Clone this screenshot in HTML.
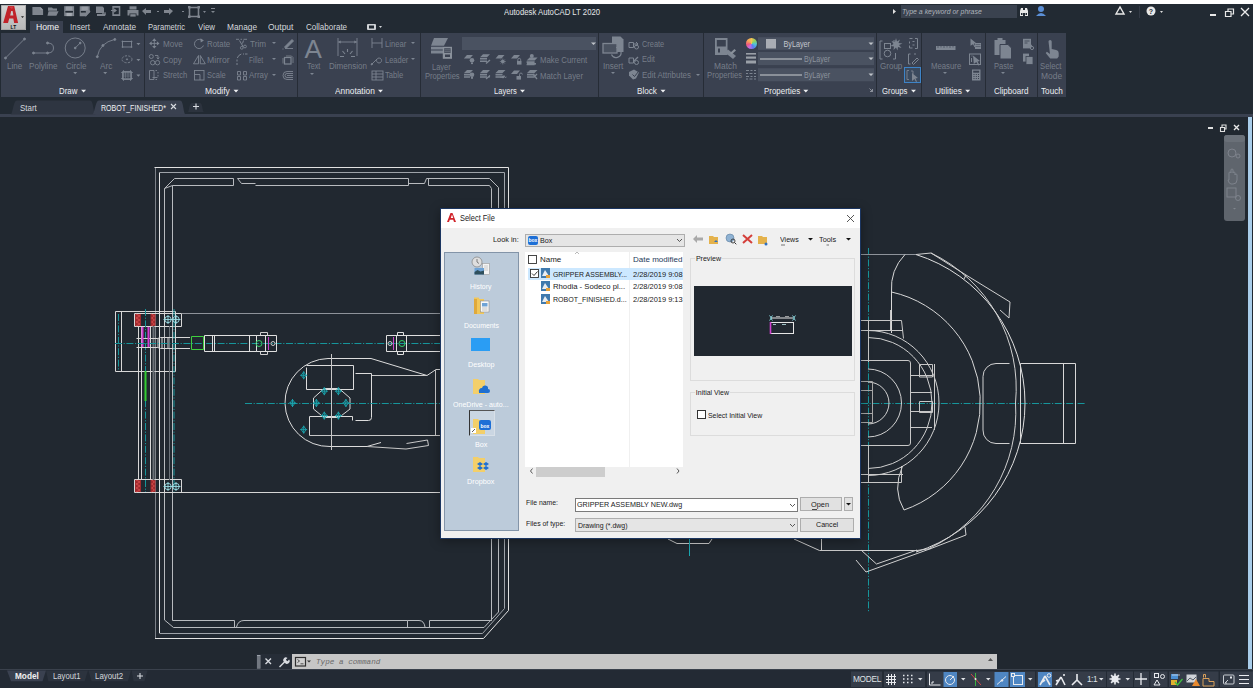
<!DOCTYPE html>
<html><head><meta charset="utf-8">
<style>
*{margin:0;padding:0;box-sizing:border-box}
html,body{width:1257px;height:694px;overflow:hidden;background:#fff;font-family:"Liberation Sans",sans-serif}
.a{position:absolute}
.t{position:absolute;white-space:nowrap;font-size:8.5px;line-height:10px;color:#767d88}
.w{color:#e8e8e8}
.tab{position:absolute;top:21px;font-size:8.5px;line-height:12px;color:#d4d7dc;white-space:nowrap}
.pl{position:absolute;top:85px;font-size:8.5px;line-height:10px;color:#eceef0;white-space:nowrap}
.sep{position:absolute;top:33px;width:1px;height:64px;background:#262c36}
.dl{position:absolute;white-space:nowrap;font-size:8px;line-height:10px;color:#1a1a1a}
svg{position:absolute;overflow:visible}
</style></head><body>
<!-- app frame -->
<div class="a" style="left:0;top:4px;width:1253px;height:684px;background:#222a33"></div>
<!-- title -->
<div class="t w" style="left:504.1px;top:6.7px;font-size:8.5px;color:#e4e6e9;transform:scaleX(0.910);transform-origin:0 0">Autodesk AutoCAD LT 2020</div>
<!-- ribbon panel bg -->
<div class="a" style="left:1px;top:33px;width:1065px;height:64px;background:#3a4150"></div>
<div class="a" style="left:30px;top:21px;width:33px;height:12px;background:#3a4150"></div>
<div class="sep" style="left:144px"></div>
<div class="sep" style="left:297px"></div>
<div class="sep" style="left:420px"></div>
<div class="sep" style="left:598px"></div>
<div class="sep" style="left:703px"></div>
<div class="sep" style="left:876px"></div>
<div class="sep" style="left:921px"></div>
<div class="sep" style="left:985px"></div>
<div class="sep" style="left:1037px"></div>

<!-- QAT -->
<svg style="left:0;top:0" width="1257" height="40">
 <g fill="#7f858e">
  <path d="M32.4 7h8l2.7 2.7V15h-10.7z"/><path d="M40.4 7v2.7h2.7" fill="#a0a5ad"/>
  <path d="M48 7.4h4l1 1.2h4v2.2h-9z M48.5 11.2h10.1l-2.2 4.5h-8.9z"/>
  <rect x="64.2" y="6.2" width="9.9" height="9.9"/><rect x="66" y="6.6" width="6.3" height="3.6" fill="#979ca4"/><rect x="65.3" y="11" width="7.7" height="1.6" fill="#222a33"/><rect x="66.5" y="13" width="5.3" height="3.1" fill="#a6abb2"/>
  <path d="M79.7 6.2h10v6l-3.5 4h-6.5z"/><rect x="81.5" y="6.6" width="6.3" height="3.6" fill="#979ca4"/><rect x="80.8" y="11" width="5" height="1.6" fill="#222a33"/>
  <path d="M83.5 13l2.2 2.4 4.3-4.6" stroke="#7f858e" stroke-width="1.5" fill="none"/>
  <path d="M96 6.5h6.5l1.5 1.5v5h-8z"/><path d="M97 14h9l-1 2h-8z"/><rect x="102" y="12.5" width="4" height="1.2"/>
  <path d="M112.3 6h8v10h-8z"/><rect x="113.8" y="7.8" width="5" height="6.4" fill="#222a33"/><path d="M111 10.5h5M114 9l2 1.5-2 1.5" stroke="#7f858e" stroke-width="1.2" fill="none"/>
  <path d="M127.5 10h11v5.5h-11z"/><rect x="129.5" y="6.3" width="7" height="3.2"/><rect x="129.5" y="13.5" width="7" height="3.2" fill="#222a33"/><rect x="130.3" y="14.2" width="5.4" height="2.4"/>
  <path d="M142 11l4-3v2h5v3h-5v2z"/>
  <path d="M173 11l-4-3v2h-5v3h5v2z"/>
  <rect x="157" y="11" width="2" height="1"/><rect x="182" y="11" width="2" height="1"/>
  <path d="M189.5 7.5h9v9h-9z" fill="none" stroke="#7f858e" stroke-width="1.6"/>
  <rect x="188" y="6" width="2.5" height="2.5"/><rect x="197.5" y="6" width="2.5" height="2.5"/><rect x="188" y="15.5" width="2.5" height="2.5"/><rect x="197.5" y="15.5" width="2.5" height="2.5"/>
  <path d="M203 11h3l-1.5 2z"/><rect x="211" y="8" width="4" height="1"/><path d="M211 11h4l-2 2z"/>
 </g>
 <!-- search -->
 <path d="M893 9v5l3-2.5z" fill="#e0e0e0"/>
 <rect x="901" y="5" width="116" height="13" fill="#3a424f"/>
 <g fill="#e8e8e8"><path d="M1020 16v-5l1-3h2v8z M1025 16v-8h2l1 3v5z"/><rect x="1023" y="10" width="2" height="3"/></g><g fill="#222a33"><rect x="1021" y="13" width="1.5" height="2"/><rect x="1025.5" y="13" width="1.5" height="2"/></g>
 <g fill="#5b8fd6"><circle cx="1041" cy="9" r="3"/><path d="M1036 16q5-6 10 0z"/></g>
 <path d="M1120 7l-4 7h8z" fill="none" stroke="#e8e8e8" stroke-width="1.4"/><path d="M1129 11h3l-1.5 2z" fill="#ddd"/>
 <rect x="1139" y="6" width="1" height="12" fill="#333a45"/>
 <circle cx="1151" cy="11" r="4.5" fill="#e8e8e8"/><text x="1151" y="14" font-size="7" font-weight="bold" text-anchor="middle" fill="#222a33" font-family="Liberation Sans">?</text>
 <path d="M1160 11h3l-1.5 2z" fill="#ddd"/>
 <rect x="1210" y="14" width="6" height="2" fill="#e8e8e8"/>
 <path d="M1225.5 11.5h5.5v5h-5.5z M1228 11.5v-2.5h5.5v5h-2.5" fill="none" stroke="#e8e8e8" stroke-width="1.2"/>
 <path d="M1241 8l8 8M1249 8l-8 8" stroke="#ececec" stroke-width="1.3"/>
 <!-- logo -->
 <defs><linearGradient id="lg" x1="0" y1="0" x2="0" y2="1"><stop offset="0" stop-color="#d6d6d6"/><stop offset="0.5" stop-color="#c4c4c4"/><stop offset="1" stop-color="#b8b8b8"/></linearGradient></defs>
 <rect x="1" y="5" width="25" height="25" fill="url(#lg)"/>
 <rect x="1.5" y="5.5" width="24" height="24" fill="none" stroke="#9a9a9a" stroke-width="0.6"/>
 <path d="M3.2 23L8 6h6.2l3.9 17h-3.9l-0.9-4.5h-4.1L8 23z M10.2 15.5h3.2l-0.8-4.5h-1.4z" fill="#c0232a" fill-rule="evenodd"/>
 <path d="M8.5 6.5h5L12 9z" fill="#e0555a" opacity="0.6"/>
 <text x="10.6" y="28.6" font-size="4.6" font-weight="bold" fill="#111" font-family="Liberation Sans" textLength="5.6" lengthAdjust="spacingAndGlyphs">LT</text>
 <path d="M21 16.2h3l-1.5 1.7z" fill="#222"/>
 <!-- video icon on tab row -->
 <rect x="367" y="24" width="9" height="6" fill="#cfd2d6" rx="1"/><rect x="369" y="25.5" width="5" height="3" fill="#222a33"/><path d="M379 26h3l-1.5 2z" fill="#cfd2d6"/>
</svg>

<!-- tabs -->
<div class="tab" style="left:35.5px;color:#f4f4f4;top:20.5px;transform:scaleX(1.014);transform-origin:0 0">Home</div>
<div class="tab" style="left:69.5px;top:20.5px;transform:scaleX(0.940);transform-origin:0 0">Insert</div>
<div class="tab" style="left:102.5px;top:20.5px;transform:scaleX(0.970);transform-origin:0 0">Annotate</div>
<div class="tab" style="left:147.5px;top:20.5px;transform:scaleX(0.900);transform-origin:0 0">Parametric</div>
<div class="tab" style="left:197.5px;top:20.5px;transform:scaleX(0.930);transform-origin:0 0">View</div>
<div class="tab" style="left:226.5px;top:20.5px;transform:scaleX(0.977);transform-origin:0 0">Manage</div>
<div class="tab" style="left:268.1px;top:20.5px;transform:scaleX(0.995);transform-origin:0 0">Output</div>
<div class="tab" style="left:306.2px;top:20.5px;transform:scaleX(0.945);transform-origin:0 0">Collaborate</div>

<!-- panel labels -->
<div class="pl" style="left:59.2px;top:85.8px;transform:scaleX(0.922);transform-origin:0 0">Draw</div>
<div class="pl" style="left:204.5px;top:85.8px;transform:scaleX(0.990);transform-origin:0 0">Modify</div>
<div class="pl" style="left:334.5px;top:85.8px;transform:scaleX(0.979);transform-origin:0 0">Annotation</div>
<div class="pl" style="left:494.1px;top:85.8px;transform:scaleX(0.890);transform-origin:0 0">Layers</div>
<div class="pl" style="left:637.0px;top:85.8px;transform:scaleX(0.957);transform-origin:0 0">Block</div>
<div class="pl" style="left:764.0px;top:85.8px;transform:scaleX(0.932);transform-origin:0 0">Properties</div>
<div class="pl" style="left:882.0px;top:85.8px;transform:scaleX(0.915);transform-origin:0 0">Groups</div>
<div class="pl" style="left:935.0px;top:85.8px;transform:scaleX(0.982);transform-origin:0 0">Utilities</div>
<div class="pl" style="left:994.0px;top:85.8px;transform:scaleX(0.945);transform-origin:0 0">Clipboard</div>
<div class="pl" style="left:1040.8px;top:85.8px;transform:scaleX(0.961);transform-origin:0 0">Touch</div>


<!-- ribbon items -->
<div class="t" style="left:7.3px;top:61.2px;transform:scaleX(0.945);transform-origin:0 0">Line</div>
<div class="t" style="left:29.1px;top:61.2px;transform:scaleX(0.954);transform-origin:0 0">Polyline</div>
<div class="t" style="left:65.7px;top:61.2px;transform:scaleX(0.943);transform-origin:0 0">Circle</div>
<div class="t" style="left:99.7px;top:61.2px;transform:scaleX(0.973);transform-origin:0 0">Arc</div>
<div class="t" style="left:163.2px;top:38.6px;transform:scaleX(0.957);transform-origin:0 0">Move</div>
<div class="t" style="left:163.2px;top:54.5px;transform:scaleX(0.942);transform-origin:0 0">Copy</div>
<div class="t" style="left:163.2px;top:70.3px;transform:scaleX(0.902);transform-origin:0 0">Stretch</div>
<div class="t" style="left:207.1px;top:38.6px;transform:scaleX(0.926);transform-origin:0 0">Rotate</div>
<div class="t" style="left:207.1px;top:54.5px;transform:scaleX(1.018);transform-origin:0 0">Mirror</div>
<div class="t" style="left:207.1px;top:70.3px;transform:scaleX(0.884);transform-origin:0 0">Scale</div>
<div class="t" style="left:249.5px;top:38.6px;transform:scaleX(0.959);transform-origin:0 0">Trim</div>
<div class="t" style="left:249.3px;top:54.5px;transform:scaleX(0.780);transform-origin:0 0">Fillet</div>
<div class="t" style="left:249.3px;top:70.3px;transform:scaleX(0.930);transform-origin:0 0">Array</div>
<div class="t" style="left:307.0px;top:61.0px;transform:scaleX(0.853);transform-origin:0 0">Text</div>
<div class="t" style="left:328.5px;top:61.0px;transform:scaleX(0.946);transform-origin:0 0">Dimension</div>
<div class="t" style="left:385.2px;top:38.6px;transform:scaleX(0.901);transform-origin:0 0">Linear</div>
<div class="t" style="left:385.2px;top:54.5px;transform:scaleX(0.880);transform-origin:0 0">Leader</div>
<div class="t" style="left:385.2px;top:70.3px;transform:scaleX(0.900);transform-origin:0 0">Table</div>
<div class="t" style="left:431.9px;top:61.5px;transform:scaleX(0.884);transform-origin:0 0">Layer</div>
<div class="t" style="left:424.5px;top:70.6px;transform:scaleX(0.895);transform-origin:0 0">Properties</div>
<div class="t" style="left:540.2px;top:54.6px;transform:scaleX(0.918);transform-origin:0 0">Make Current</div>
<div class="t" style="left:540.2px;top:70.6px;transform:scaleX(0.919);transform-origin:0 0">Match Layer</div>
<div class="t" style="left:602.9px;top:60.6px;transform:scaleX(0.955);transform-origin:0 0">Insert</div>
<div class="t" style="left:642.3px;top:38.9px;transform:scaleX(0.870);transform-origin:0 0">Create</div>
<div class="t" style="left:642.3px;top:54.1px;transform:scaleX(0.880);transform-origin:0 0">Edit</div>
<div class="t" style="left:642.3px;top:70.2px;transform:scaleX(0.934);transform-origin:0 0">Edit Attributes</div>
<div class="t" style="left:713.5px;top:61.2px;transform:scaleX(0.989);transform-origin:0 0">Match</div>
<div class="t" style="left:707.0px;top:70.2px;transform:scaleX(0.908);transform-origin:0 0">Properties</div>
<div class="t" style="left:880.2px;top:61.3px;transform:scaleX(0.944);transform-origin:0 0">Group</div>
<div class="t" style="left:930.5px;top:61.3px;transform:scaleX(0.913);transform-origin:0 0">Measure</div>
<div class="t" style="left:993.5px;top:61.3px;transform:scaleX(0.892);transform-origin:0 0">Paste</div>
<div class="t" style="left:1040.4px;top:61.3px;transform:scaleX(0.910);transform-origin:0 0">Select</div>
<div class="t" style="left:1040.8px;top:70.9px;transform:scaleX(0.992);transform-origin:0 0">Mode</div>
<svg style="left:0;top:0" width="1257" height="100">
 <g fill="#7d8591" stroke="none">
  <!-- dropdown arrows -->
  <path d="M73.2 72h4l-2 2.2z M103.2 72h4l-2 2.2z M136.4 43h4l-2 2.2z M136.4 59h4l-2 2.2z M136.4 74.5h4l-2 2.2z"/>
  <path d="M272 42h4l-2 2z M272 58h4l-2 2z M272 74h4l-2 2z M411 42h4l-2 2z M411 58h4l-2 2z M310 73h4l-2 2z"/>
  <path d="M611 72h4l-2 2z M696 74h4l-2 2z M943 72h4l-2 2z M1001 72h4l-2 2z"/>
 </g>
 <g fill="#eceef0">
  <path d="M81.1 89.8h5l-2.5 2.6z M233.5 89.8h5l-2.5 2.6z M378.0 89.8h5l-2.5 2.6z M520.0 89.8h5l-2.5 2.6z M660.5 89.8h5l-2.5 2.6z M803.3 89.8h5l-2.5 2.6z M911.0 89.8h5l-2.5 2.6z M965.2 89.8h5l-2.5 2.6z"/>
 </g>
 <g fill="none" stroke="#7d8591" stroke-width="0.9">
  <!-- Draw -->
  <path d="M5.5 58L24.5 39"/><circle cx="5.5" cy="58" r="1" fill="#7d8591"/><circle cx="24.5" cy="39" r="1" fill="#7d8591"/>
  <path d="M33.5 53h14q6 0 6-5t-6-5"/><circle cx="33.5" cy="53" r="1" fill="#7d8591"/><circle cx="47.5" cy="53" r="1" fill="#7d8591"/><circle cx="47.5" cy="43" r="1" fill="#7d8591"/>
  <circle cx="75.2" cy="48" r="10"/><path d="M75.2 48l5-5"/><circle cx="75.2" cy="48" r="0.9" fill="#7d8591"/><circle cx="80.2" cy="43" r="0.9" fill="#7d8591"/>
  <path d="M97.3 56.7q2.5-14 17.5-17.3"/><circle cx="97.3" cy="56.7" r="1" fill="#7d8591"/><circle cx="102.9" cy="45.5" r="1" fill="#7d8591"/><circle cx="114.8" cy="39.4" r="1" fill="#7d8591"/>
  <path d="M122.5 41.5h9v5.5h-9z"/><path d="M121.5 41.5h2M130.5 41.5h2M121.5 47h2M130.5 47h2M122.5 40.5v2M131.5 40.5v2M122.5 46v2M131.5 46v2" stroke-width="0.7"/>
  <ellipse cx="127" cy="59.3" rx="5" ry="3.5" stroke-dasharray="2.2 1.3"/><circle cx="127" cy="59.3" r="0.6" fill="#7d8591"/>
  <path d="M122.5 71.5h9v8h-9z"/><path d="M121 72.5h12M121 78.5h12M123.5 70v11M130.5 70v11" stroke-width="0.7"/><path d="M123 74h8M123 76h8M125.5 72v6M128 72v6" stroke-width="0.5"/>
  <!-- Modify -->
  <path d="M154.3 40v7M150.8 43.4h7"/>
  <path d="M154.3 38.3l-2.2 2.6h4.4zM154.3 48.5l-2.2-2.6h4.4zM149.1 43.4l2.6-2.2v4.4zM159.5 43.4l-2.6-2.2v4.4z" fill="#7d8591" stroke="none"/>
  <circle cx="151.3" cy="56.5" r="2"/><path d="M155 55.5h3v3.5M156.8 57.5l1.2 1.6 1.2-1.6"/><circle cx="152.7" cy="62.7" r="2.2"/><circle cx="157.5" cy="62.7" r="2.2"/>
  <path d="M154 70.5h-4.5v9h4.5M154 70.5v9" /><path d="M155.5 70.5h1.5M158 72v1.5M158 75v1.5M155.5 79.5h1.5M152.5 77.5h5" stroke-width="0.9"/>
  <path d="M203.4 45.5a4.6 4.6 0 1 1-2-5.5"/><path d="M200.5 38.2l3.4 2.2-3.2 2.2z" fill="#7d8591" stroke="none"/>
  <path d="M198.5 55.5v8.3h-5zM200.3 55.5v8.3h5z"/>
  <rect x="194.5" y="70.5" width="9.5" height="9.5"/><path d="M194.5 74.5h5.5v5.5"/>
  <path d="M236 39.3h3M240.5 39.3h1.5M243.5 39.3h3.5" stroke-width="0.9"/>
  <path d="M239.5 40.5l3.5 6M243.5 40.5l-1 3" stroke-width="1"/><circle cx="241.8" cy="47.8" r="1.4"/><circle cx="245" cy="46.5" r="1.4"/>
  <path d="M237 65v-2M237 61.5v-2M237.3 58q1-3 4-4M243 54h1M245 54h2.5" stroke-width="1"/>
  <path d="M237.5 71.5h3v3.5h-3zM243.5 71.5h3v3.5h-3zM237.5 76.5h3v3.5h-3zM243.5 76.5h3v3.5h-3z" stroke-width="0.9"/>
  <path d="M284.5 47l7.5-7.5 1.5 1.5-7.5 7.5z" fill="#7d8591"/><path d="M282.5 49h1M285 48.5h8" stroke-width="0.9"/>
  <rect x="284.5" y="57.5" width="6.5" height="6.5" stroke-width="1.2"/><path d="M286 56h5.5l1.5 1.5v5.5M283 58v5.5" stroke-width="0.8"/>
  <path d="M293 71.5h-6a4 4 0 0 0 0 8h6M293 73.5h-6a2 2 0 0 0 0 4h6M287 75.5h6" stroke-width="0.9"/>
    <!-- Annotation -->
  <path d="M338 38v18M357 38v18M338 42h19M339 42l2-1M339 42l2 1M356 42l-2-1M356 42l-2 1"/>
  <path d="M342.5 51l2.5 3M347.5 49v3M352.5 51l-2.5 3M340 56.5h4M351 56.5h4" stroke-width="1.1"/>
  <path d="M372 38v10M382 38v10M372 43h10"/>
  <path d="M372 64l5-5M379 58a2.5 2.5 0 1 0 0.1 0"/><path d="M371 65l2-1-1-1z" fill="#7d8591"/>
  <rect x="372" y="71" width="11" height="9"/><path d="M372 74h11M372 77h11M376 71v9"/>
 </g>
 <text x="304.5" y="57.6" font-size="26" fill="#7d8591" font-family="Liberation Sans">A</text>
 <!-- Layers -->
 <g fill="#7d8591">
  <path d="M434 38h14l-4 7.8h-13z"/><path d="M431 46.8h12v2.8h-12z M431 50.6h12v3h-12z"/>
  <path d="M444 40l3-1.5-3 7z" opacity="0"/>
  <rect x="442.8" y="46.8" width="9.2" height="12" fill="#8a919b"/><rect x="444.2" y="48.3" width="6.4" height="4.5" fill="#3a4150"/><path d="M444.5 49.8h6M444.5 51.3h6" stroke="#8a919b" stroke-width="0.6"/><rect x="445" y="54.5" width="5" height="2.5" fill="#3a4150"/>
 </g>
 <rect x="462" y="37" width="134" height="13" fill="#4a5261"/>
 <path d="M591 42.5h5l-2.5 2.5z" fill="#c0c4ca"/>
 <g fill="#7d8591">
  <path d="M466.9 55.0h6.0l-3.0 3.6h-6.0z"/><circle cx="472" cy="60.3" r="2.3"/><rect x="471" y="62.5" width="2" height="1.6"/>
  <path d="M483.0 54.2h7.0l-3.0 3.0h-7.0z M480.0 58.0h7.0v1.6h-7.0z M480.0 60.4h7.0v1.6h-7.0z"/><path d="M486 63.5l4-3.5" stroke="#7d8591" stroke-width="1.4"/>
  <path d="M498.5 55.0h6.0l-3.0 3.6h-6.0z"/><circle cx="502.8" cy="61.5" r="1.8"/><path d="M502.8 58.5v6M499.8 61.5h6M500.8 59.5l4 4M504.8 59.5l-4 4" stroke="#7d8591" stroke-width="0.7"/>
  <path d="M514.0 55.0h6.0l-3.0 3.6h-6.0z"/><rect x="517" y="61" width="4.5" height="3.6"/><path d="M517.8 61v-1.2a1.45 1.45 0 0 1 2.9 0v1.2" fill="none" stroke="#7d8591" stroke-width="0.9"/>
  <circle cx="531.8" cy="56" r="2"/><path d="M529.6 57.5h8.0l-3.0 3.0h-8.0z M526.6 61.3h8.0v1.6h-8.0z M526.6 63.7h8.0v1.6h-8.0z"/><path d="M527 63h9v1.6h-9z"/>
  <path d="M467.0 70.0h6.0l-3.0 3.0h-6.0z M464.0 73.8h6.0v1.6h-6.0z M464.0 76.2h6.0v1.6h-6.0z"/><circle cx="472" cy="74.8" r="2.3"/><rect x="471" y="77" width="2" height="1.8"/>
  <path d="M483.0 70.0h7.0l-3.0 3.0h-7.0z M480.0 73.8h7.0v1.6h-7.0z M480.0 76.2h7.0v1.6h-7.0z"/><path d="M486 79l4-3.5" stroke="#7d8591" stroke-width="1.2"/><path d="M490 75v2.5h-2.5z"/>
  <path d="M498.5 70.0h7.0l-3.0 3.0h-7.0z M495.5 73.8h7.0v1.6h-7.0z M495.5 76.2h7.0v1.6h-7.0z"/><path d="M500 77l3 .5 1-2 1 2 1.5-.5" stroke="#7d8591" stroke-width="0.9" fill="none"/><circle cx="503" cy="77" r="1.3"/>
  <path d="M514.0 70.5h6.0l-3.0 3.6h-6.0z"/><rect x="516.5" y="76" width="4.5" height="3.6"/><path d="M519.5 76v-1.5a1.45 1.45 0 0 1 2.9 0" fill="none" stroke="#7d8591" stroke-width="0.9"/>
  <path d="M530.0 70.0h7.5l-3.0 3.0h-7.5z M527.0 73.8h7.5v1.6h-7.5z M527.0 76.2h7.5v1.6h-7.5z"/><path d="M533 74l4 5M537 74l-3 3" stroke="#7d8591" stroke-width="1.3"/>
 </g>
 <!-- Block -->
 <g fill="none" stroke="#7d8591" stroke-width="1">
  <path d="M612 36.6h8.5l3 3V52h-11.5z" fill="#7d8591" stroke="none"/>
  <rect x="603" y="43.5" width="14" height="9.5" fill="#4a5260" stroke="#7d8591" stroke-width="1.3"/>
  <path d="M616 47.5a5 5 0 1 1 -4.5 7" stroke-width="1.2"/>
  <path d="M629 42.5h4.5v5h-4.5z M634 44h3.5" /><path d="M636 42l2 2-2 2" /><circle cx="636.5" cy="47" r="2"/>
  <path d="M629 58h4.5v5h-4.5z"/><path d="M634 61l4-4" stroke-width="1.3"/><circle cx="636.5" cy="62.5" r="2"/>
 </g>
 <path d="M629 72l5-2.5 5 3-3 6-3 1-4-4z" fill="#7d8591"/><path d="M632.5 74.5l2 2 4-5" stroke="#3a4150" stroke-width="1" fill="none"/>
 <!-- Properties -->
 <g fill="#7d8591">
  <rect x="715" y="38" width="12.5" height="17"/><rect x="716.8" y="40" width="9" height="6.5" fill="#3a4150"/><rect x="718" y="48.5" width="2" height="4" fill="#3a4150"/>
  <path d="M725 52.5l3-3 8 6.5-3 3z"/><path d="M730 53l4.5-4 1.5 1.5-4.5 4z" fill="#8a919b"/>
 </g>
 <g fill="#9aa0a8"><rect x="746" y="53" width="10" height="1.6"/><rect x="746" y="56.5" width="10" height="2.2"/><rect x="746" y="60.5" width="10" height="3"/></g>
 <g fill="#7d8591"><path d="M746 70.5h3M750.5 70.5h2M754 70.5h2M746 73.5h2M749.5 73.5h3M754 73.5h2M746 76.5h3M750.5 76.5h2M754 76.5h2M746 79h2M749.5 79h3M754 79h2" stroke="#7d8591" stroke-width="1.2"/></g>
 <rect x="758" y="37.2" width="116" height="12.7" fill="#4a5261"/>
 <rect x="758" y="52" width="116" height="13.1" fill="#4a5261"/>
 <rect x="758" y="68.2" width="116" height="13.1" fill="#4a5261"/>
 <rect x="766" y="39" width="10" height="9.5" fill="#a9adb4"/>
 <text x="783.5" y="46.8" font-size="8.5" fill="#c3c7cd" font-family="Liberation Sans" textLength="26.5" lengthAdjust="spacingAndGlyphs">ByLayer</text>
 <rect x="760" y="58.5" width="42" height="1" fill="#c9cdd2"/><text x="804" y="62.2" font-size="8.5" fill="#8d949e" font-family="Liberation Sans" textLength="26" lengthAdjust="spacingAndGlyphs">ByLayer</text>
 <rect x="760" y="74.5" width="42" height="1" fill="#c9cdd2"/><text x="804" y="78.2" font-size="8.5" fill="#8d949e" font-family="Liberation Sans" textLength="26" lengthAdjust="spacingAndGlyphs">ByLayer</text>
 <path d="M868.5 42.5h5l-2.5 2.5z M868.5 57.5h5l-2.5 2.5z M868.5 73.5h5l-2.5 2.5z" fill="#c0c4ca"/>
 <path d="M869.5 88.5l3 3M872.5 89v2.5h-2.5" fill="none" stroke="#a0a5ad" stroke-width="0.8"/>
 <!-- Groups -->
 <g fill="none" stroke="#7d8591" stroke-width="1">
  <path d="M882.5 41h-2.5v18h2.5M893 41h2.5M893 59h2.5v-6"/><rect x="884.5" y="43.5" width="6" height="5"/><circle cx="887.5" cy="53.5" r="3.3"/>
  <path d="M909.5 38.5h3M909.5 41.5v2M909.5 45.5v2.5h3M915 38.5h2.5v10h-2.5M912.5 41.5h2M912.5 45h2"/>
  <path d="M910.5 54h-2v10h2M914 54h2"/><path d="M912 63l5-5 1.5 1.5-5 5z"/>
 </g>
 <path d="M896 38l1 3.5 3-2-1.5 3.5 4 .5-3.5 1.5 2.5 3-3.5-1-.5 3.5-1.5-3-2.5 2.5.5-3.5-3.5-.5 3-2-2-3 3.5 1z" fill="#7d8591"/>
 <rect x="904.5" y="67.5" width="16" height="15" fill="#3b4a5e" stroke="#3e84c8" stroke-width="1"/>
 <path d="M909 70.5h-2v9h2M911 71h2v3" fill="none" stroke="#7d8591" stroke-width="0.9"/><path d="M912 73l6 5-2.5.5 1.5 3-1 .5-1.5-3-2.5 2z" fill="#7d8591"/>
 <!-- Utilities -->
 <rect x="936" y="46" width="19.5" height="4" fill="#7d8591"/>
 <path d="M938 46v2M941 46v1.5M944 46v2M947 46v1.5M950 46v2M953 46v1.5" stroke="#3a4150" stroke-width="0.6"/>
 <g fill="#7d8591">
  <path d="M970.5 38.5l5.5 4.5-2 .8 1.5 3-1 .5-1.5-3-2.5 1.5z"/><rect x="975" y="43" width="6" height="6"/>
  <path d="M975.5 44.5h5M975.5 46.5h5" stroke="#3a4150" stroke-width="0.5"/>
  <rect x="969.5" y="54" width="11" height="10.5" fill="none" stroke="#7d8591"/><path d="M973 55.5l7 5.5-2.5.5 2 3.5-1.2.6-2-3.5-2.5 2z"/>
  <path d="M971.5 58v4M971.5 56h1" stroke="#7d8591"/>
  <rect x="972" y="69.5" width="8.5" height="11"/><rect x="973.2" y="70.7" width="6" height="2" fill="#3a4150"/>
  <path d="M973.5 74.5h1M975.8 74.5h1M978 74.5h1M973.5 76.5h1M975.8 76.5h1M978 76.5h1M973.5 78.5h1M975.8 78.5h1M978 78.5h1" stroke="#3a4150" stroke-width="1"/>
 </g>
 <!-- Clipboard -->
 <g fill="#7d8591">
  <rect x="994.5" y="40" width="11" height="15"/><rect x="997.5" y="38" width="5" height="3"/>
  <path d="M1000 44.5h8l3.5 3.5v11h-11.5z" stroke="#3a4150" stroke-width="1"/>
  <rect x="1023" y="38.8" width="8" height="9.6"/><path d="M1024.5 41h5M1024.5 43h3" stroke="#3a4150" stroke-width="0.8"/>
  <circle cx="1030" cy="46" r="1.6" fill="none" stroke="#7d8591"/><circle cx="1032" cy="48" r="1.6" fill="none" stroke="#7d8591"/>
  <rect x="1023" y="53.6" width="6" height="8"/><rect x="1026" y="56.5" width="7" height="8" stroke="#3a4150" stroke-width="0.8"/>
 </g>
 <!-- Touch -->
 <path d="M1048.5 41.5a1.6 1.6 0 0 1 3.2 0v7.5l4.5 1q2.5.6 2.5 3v3.5l-1.5 2h-7l-4.5-5.5 1.2-1.2 3.1 2.2z" fill="#7d8591"/>
</svg>

<div class="a" style="left:745.5px;top:38px;width:11px;height:11px;border-radius:50%;background:conic-gradient(#f6c453,#8fd35f,#4fc3d9,#5a7df0,#c36be6,#f05a7a,#f6a35a,#f6c453)"></div>
<!-- file tabs -->
<div class="a" style="left:0;top:114px;width:1253px;height:3px;background:#3a4150"></div>
<svg style="left:0;top:0" width="220" height="120">
 <path d="M10.5 114.5C13 114.5 13 100.5 17 100.5H90C94 100.5 93 114.5 96 114.5Z" fill="#2e3541"/>
 <path d="M92 114.5C95 114.5 95 100.5 99 100.5H180C184 100.5 183 114.5 186 114.5Z" fill="#3a4150"/>
 <path d="M188 112C189 112 189 103 192 103H200C203 103 202 112 204 112Z" fill="#2c333e"/>
</svg>


<div class="t" style="left:20.1px;top:102.5px;color:#d6d9de;transform:scaleX(0.936);transform-origin:0 0">Start</div>
<div class="t" style="left:101.0px;top:102.5px;color:#eef0f2;transform:scaleX(0.833);transform-origin:0 0">ROBOT_FINISHED*</div>

<!-- drawing area -->
<div class="a" style="left:0;top:117px;width:1253px;height:553px;background:#212830"></div>
<div class="a" style="left:1248px;top:117px;width:4px;height:553px;background:#a9cdea"></div>


<svg style="left:0;top:0" width="1257" height="694">
 <g fill="none" stroke-width="1">
  <!-- left frame -->
  <path d="M155.5 638V167.5" stroke="#7c8188"/>
  <path d="M154.5 167.5H508.5V610.5L483.5 638.5H155" stroke="#e2e2e2"/>
  <path d="M159.5 633V172.5" stroke="#e6e6e6"/>
  <path d="M159.5 172.5H504.5V608.5L482.5 633.5H159.5" stroke="#9ea3a9"/>
  <path d="M164.5 620V188.5L174.5 178.5H233.5V185.5H172.5V620.5" stroke="#b8bbbf"/>
  <path d="M164.5 188.5L172.5 185.5" stroke="#b8bbbf"/>
  <path d="M237.5 178.5H408.5V185.5H255.5M237.5 178.5L241.5 183.5H255.5" stroke="#b8bbbf"/>
  <path d="M408.5 183.5H424.5L426.5 178.5H489.5L498.5 187.5V612L484 627.5H173.5L164.5 620" stroke="#b8bbbf"/>
  <path d="M428.5 178.5V185.5H489.5L491.5 188.5V620.5L484.5 620.5" stroke="#b8bbbf"/>
  <path d="M172.5 620.5H234.5V627M236.5 627Q238 620.5 244 620.5H407.5V627M407.5 620.5H419Q424 620.5 425 627M429.5 627V620.5H491.5" stroke="#b8bbbf"/>
  <path d="M182 313.5H441" stroke="#8e939a"/>
  <path d="M181 492.5H441" stroke="#d6d6d6"/>
  <!-- left gripper block -->
  <path d="M115.5 311.5H175.5V371.5H115.5Z" stroke="#d8d8d8"/>
  <path d="M121.5 312V371" stroke="#d8d8d8"/>
  <path d="M118.5 314V370" stroke="#16959b" stroke-dasharray="7 1.6 1.2 1.6"/>
  <path d="M134.5 313.5H181.5V326.5H134.5Z M164.5 313.5V326.5" stroke="#d8d8d8"/>
  <path d="M134.5 479.5H181.5V492.5H134.5Z M164.5 479.5V492.5" stroke="#d8d8d8"/>
  <path d="M138.5 326V480M141.5 326V480M150.5 326V480" stroke="#d8d8d8"/>
  <path d="M153.5 326V480" stroke="#6a7077" stroke-width="2"/>
  <path d="M169.5 326V480" stroke="#6a7077"/>
  <path d="M145.5 309V492" stroke="#16959b" stroke-dasharray="7 1.6 1.2 1.6"/>
  <path d="M145.5 371V401" stroke="#33cc33" stroke-width="2"/>
  <path d="M136.5 338.5H157.5L160.5 337.5H190M136.5 347.5H157.5L160.5 348.5H190M158 338V348M162 338V348M168 338V348" stroke="#d8d8d8"/>
  <path d="M174 309V492" stroke="#16959b" stroke-dasharray="7 1.6 1.2 1.6"/>
  <rect x="135" y="314" width="6" height="12" fill="#9e2a2e"/><rect x="135" y="480" width="6" height="12" fill="#9e2a2e"/><rect x="150.5" y="314" width="5" height="12" fill="#9e2a2e"/><rect x="150.5" y="480" width="5" height="12" fill="#9e2a2e"/><path d="M136 314l4 2l-4 2l4 2l-4 2l4 2l-4 2" stroke="#e05050" stroke-width="0.8" fill="none"/><path d="M136 480l4 2l-4 2l4 2l-4 2l4 2l-4 2" stroke="#e05050" stroke-width="0.8" fill="none"/><path d="M151.5 314l3 2l-3 2l3 2l-3 2l3 2l-3 2" stroke="#e05050" stroke-width="0.8" fill="none"/><path d="M151.5 480l3 2l-3 2l3 2l-3 2l3 2l-3 2" stroke="#e05050" stroke-width="0.8" fill="none"/>
  <path d="M142.5 327V347M148.5 327V347" stroke="#d23bd2" stroke-width="2"/>
  <path d="M115 343.5H440" stroke="#16959b" stroke-dasharray="7 1.6 1.2 1.6"/>
  <path d="M191.5 336.5H203.5V349.5H191.5Z" stroke="#3fcf3f"/>
  <path d="M204.5 335.5H256.5V351.5H204.5Z M212.5 336V351M214.5 336V351M249.5 336V351" stroke="#e0e0e0"/>
  <path d="M256.5 335.5H276.5V351.5H256.5Z M265.5 335.5V351.5" stroke="#e0e0e0"/>
  <path d="M260.5 335.5V332.5H267.5V335.5M260.5 351.5V354.5H267.5V351.5" stroke="#d0d0d0"/>
  <path d="M386.5 335.5H441M386.5 351.5H441M386.5 335.5V351.5M406.5 335.5V351.5M396.5 335.5V351.5M397.5 335.5V332.5H403.5V335.5M397.5 351.5V354.5H403.5V351.5" stroke="#e0e0e0"/>
  <circle cx="259" cy="343.5" r="3" stroke="#33cc66"/><circle cx="402" cy="343.5" r="3" stroke="#33cc66"/>
  <circle cx="273" cy="343.5" r="2" stroke="#c8c8c8"/><circle cx="390" cy="343.5" r="2" stroke="#c8c8c8"/>
  <path d="M268.5 337V350M393.5 337V350" stroke="#cc44cc"/>
  <g stroke="#9adfe6" stroke-width="0.9"><circle cx="168" cy="319.5" r="3.2"/><path d="M163.5 319.5h9M168 315.0v9"/><circle cx="176" cy="319.5" r="3.2"/><path d="M171.5 319.5h9M176 315.0v9"/><circle cx="168" cy="486.5" r="3.2"/><path d="M163.5 486.5h9M168 482.0v9"/><circle cx="176" cy="486.5" r="3.2"/><path d="M171.5 486.5h9M176 482.0v9"/></g>
  <!-- wrist -->
  <path d="M328 358.5A44 44 0 0 0 330 446.5H367L381 442.5" stroke="#dcdcdc"/>
  <path d="M328 358.5H371L427 375.5L436 369.5H441" stroke="#dcdcdc"/>
  <path d="M372 375.5H427M435.5 370V435" stroke="#c8c8c8"/>
  <path d="M306.5 367.5V389.5H353.5V365.5H306.5" stroke="#dcdcdc"/>
  <path d="M355.5 373.5H371.5V417.5Q371.5 420.5 368.5 420.5H355.5" stroke="#dcdcdc"/>
  <path d="M309.5 435.5V416.5H352.5V420.5" stroke="#dcdcdc"/>
  <path d="M309.5 435.5H441" stroke="#c8c8c8"/>
  <path d="M367 446.5L406 449M406.5 443.5L427.5 440L428.5 445.5L406 449" stroke="#c8c8c8"/>
  <polygon points="324,388.5 339,388.5 350,398 350,409 339,417.5 324,417.5 313.5,409 313.5,398" stroke="#d8d8d8"/>
  <path d="M245 403.5H441" stroke="#16959b" stroke-dasharray="7 1.6 1.2 1.6"/>
  <path d="M331.5 354V450" stroke="#c8c8c8"/>
  <g stroke="#1aa6b0" stroke-width="0.9"><path d="M301.2 375.3l2.5-3.5 2.5 3.5-2.5 3.5z M300.2 375.3h7M303.7 371.3v8 M290.0 403.0l2.5-3.5 2.5 3.5-2.5 3.5z M289.0 403.0h7M292.5 399.0v8 M301.2 429.6l2.5-3.5 2.5 3.5-2.5 3.5z M300.2 429.6h7M303.7 425.6v8 M321.8 391.2l2.5-3.5 2.5 3.5-2.5 3.5z M320.8 391.2h7M324.3 387.2v8 M335.9 391.2l2.5-3.5 2.5 3.5-2.5 3.5z M334.9 391.2h7M338.4 387.2v8 M313.9 403.0l2.5-3.5 2.5 3.5-2.5 3.5z M312.9 403.0h7M316.4 399.0v8 M343.4 403.0l2.5-3.5 2.5 3.5-2.5 3.5z M342.4 403.0h7M345.9 399.0v8 M321.8 415.6l2.5-3.5 2.5 3.5-2.5 3.5z M320.8 415.6h7M324.3 411.6v8 M335.9 415.6l2.5-3.5 2.5 3.5-2.5 3.5z M334.9 415.6h7M338.4 411.6v8"/></g>
  <!-- below dialog -->
  <path d="M668 539L677 543.5H709L712 539" stroke="#c8c8c8"/>
  <path d="M689.5 539V556" stroke="#1aa6b0"/>
  <path d="M794 539L819.5 550.5H866M821.5 539V550" stroke="#c8c8c8"/>
  <!-- right robot -->
  <path d="M868.5 248V612" stroke="#16959b" stroke-dasharray="7 1.6 1.2 1.6"/>
  <path d="M861 403.5H1085" stroke="#16959b" stroke-dasharray="7 1.6 1.2 1.6"/>
  <path d="M861 254.5H916" stroke="#8e939a"/>
  <path d="M916 254.5A156 156 0 0 1 916 552" stroke="#e0e0e0"/>
  <path d="M931 253A150 150 0 0 1 1015.5 403" stroke="#d0d0d0"/>
  <path d="M1015.5 403A150 150 0 0 1 930 548" stroke="#d0d0d0"/>
  <path d="M905 254.5Q890 270 891.5 292V333" stroke="#d8d8d8"/>
  <path d="M891.5 292A113.5 113.5 0 0 1 904 510" stroke="#d8d8d8"/>
  <path d="M904 510Q892 490 902.5 466" stroke="#d8d8d8"/>
  <path d="M916 254.5L931 253L966 275L964 279M966 275L1010 302L1009 318L1000 310" stroke="#d0d0d0"/>
  <path d="M861 550.5H917L931 548.5L966 535L965 527M917 550L876.5 564L861 550M931 548.5L866 572L856 560" stroke="#d0d0d0"/>
  <path d="M861 320.5H901.5L903.5 338.5M861 330.5H903M868.5 320.5V362M890.5 310V331" stroke="#c8c8c8"/>
  <path d="M861 482.5H901.5V466M861 474.5H903M868.5 445V482" stroke="#c8c8c8"/>
  <path d="M868 330.5A71 72.5 0 0 1 868 475.5M868 337.5A64 65.5 0 0 1 868 468.5" stroke="#d0d0d0"/>
  <path d="M861 360.5H908Q910.5 360.5 910.5 363V443Q910.5 445.5 908 445.5H861" stroke="#c8c8c8"/>
  <path d="M868 369A33.5 34 0 0 1 868 437M868 382A21 21 0 0 1 868 424" stroke="#d0d0d0"/>
  <path d="M861 381.5H872.5V422.5H861M861 390.5H872M861 413.5H872" stroke="#a8a8a8"/>
  <path d="M919.5 364.5H932.5V377H919.5ZM919.5 401.5H932.5V412.5H919.5ZM911 375.5H932M911 392.5H932M911 411.5H932M911 427.5H932M934.5 364V430" stroke="#c8c8c8"/>
  <path d="M1009.5 363.5H996A13 13 0 0 0 983 376.5V430A13 13 0 0 0 996 443.5H1009.5" stroke="#d0d0d0"/>
  <path d="M1020.5 363.5H1075.5V443.5H1020.5Z M1063.5 364V443" stroke="#d8d8d8"/>
 </g>
</svg>

<!-- command line -->
<div class="a" style="left:256px;top:654px;width:36px;height:16px;background:#262d37"></div>
<div class="a" style="left:292px;top:654px;width:705px;height:16px;background:#c6c6c6"></div>


<!-- viewport controls & navbar -->
<svg style="left:0;top:0" width="1257" height="694">
 <rect x="1208" y="127" width="5" height="2" fill="#e0e0e0"/>
 <path d="M1220.5 127.5h4v4h-4z M1222 127v-2h4v4h-1.5" fill="none" stroke="#e0e0e0" stroke-width="1.1"/>
 <path d="M1234 125l5 5M1239 125l-5 5" stroke="#e8e8e8" stroke-width="1.4"/>
 <rect x="1224" y="135" width="21" height="86" rx="3" fill="#5f656d"/>
 <rect x="1224" y="135" width="21" height="7" rx="3" fill="#6a7078"/>
 <g fill="none" stroke="#80868e" stroke-width="0.9">
  <circle cx="1232" cy="153" r="4"/><circle cx="1238" cy="156" r="2"/>
  <path d="M1229 180v-7a1 1 0 0 1 2 0v-3a1 1 0 0 1 2 0v3a1 1 0 0 1 2 0v2a1 1 0 0 1 2 0v5q0 4-4 4h-2q-2 0-3-4z"/>
  <rect x="1227" y="188" width="9" height="9"/><circle cx="1238" cy="198" r="2.5"/>
 </g>
 <path d="M1233 208h3l-1.5 1.5z" fill="#80868e"/>
 <!-- file tab x and + -->
 <path d="M171 104l5 5M176 104l-5 5" stroke="#d8dbe0" stroke-width="1.1"/>
 <path d="M196 103.5v6M193 106.5h6" stroke="#d8dbe0" stroke-width="1.1"/>
 <!-- command line -->
 <g fill="#9aa0a8"><rect x="257" y="655" width="3.5" height="13.5"/></g>
 <g stroke="#262d37" stroke-width="0.7"><path d="M257 657h3.5M257 659h3.5M257 661h3.5M257 663h3.5M257 665h3.5M257 667h3.5"/></g>
 <path d="M265.5 658.5l5.5 5.5M271 658.5l-5.5 5.5" stroke="#d8dbe0" stroke-width="1.4"/>
 <path d="M279.5 667l5.5-5.5" stroke="#d8dbe0" stroke-width="1.5"/><path d="M284.3 662.2a2.6 2.6 0 0 1 3.2-4.2l-1.6 1.6.6 1 1 .6 1.6-1.6a2.6 2.6 0 0 1-4.2 3.2z" fill="#d8dbe0"/>
 <rect x="295.5" y="657.5" width="10" height="8.5" fill="#cfcfcf" stroke="#2e2e2e" stroke-width="1.2"/>
 <path d="M297.5 659.5l2 1.5-2 1.5M300.5 663.8h3" stroke="#2e2e2e" stroke-width="0.8" fill="none"/>
 <path d="M307 660.5h4l-2 2z" fill="#333"/>
 <path d="M988 661h5l-2.5-3z" fill="#555"/>
</svg>
<div class="t" style="left:315.9px;top:656.9px;font-family:'Liberation Mono',monospace;font-style:italic;color:#6a6a6a;font-size:8px;transform:scaleX(0.957);transform-origin:0 0">Type a command</div>
<div class="t" style="left:901.7px;top:7.0px;font-style:italic;color:#aeb3ba;font-size:8px;transform:scaleX(0.868);transform-origin:0 0">Type a keyword or phrase</div>

<!-- status bar -->
<div class="a" style="left:0;top:670px;width:1253px;height:18px;background:#232a34"></div>
<div class="a" style="left:0;top:669px;width:1253px;height:1px;background:#3a414c"></div>
<svg style="left:0;top:0" width="200" height="694"><path d="M7 670.5h39l-3.5 10.8h-31.5z" fill="#3a4150"/><path d="M46 670.5h42l-3.4 10.8h-36.3z" fill="#2c333e"/><path d="M88.4 670.5h42.6l-3.1 10.8h-36.3z" fill="#2c333e"/><path d="M131.7 670.5h15.9l-3.2 10.8h-10.8z" fill="#2c333e"/></svg>



<div class="t" style="left:14.9px;top:671.3px;color:#f0f0f0;font-weight:bold;font-size:8.5px;transform:scaleX(0.969);transform-origin:0 0">Model</div>
<div class="t" style="left:52.5px;top:671.3px;color:#d4d7dc;transform:scaleX(0.912);transform-origin:0 0">Layout1</div>
<div class="t" style="left:95.0px;top:671.3px;color:#d4d7dc;transform:scaleX(0.926);transform-origin:0 0">Layout2</div>
<svg style="left:0;top:0" width="1257" height="694">
 <path d="M140 673v6M137 676h6" stroke="#d8dbe0" stroke-width="1.1"/>
 <g fill="#353c48">
  <rect x="851" y="671.5" width="31" height="15.5"/>
  <rect x="884" y="671.5" width="41" height="15.5"/>
  <rect x="927" y="671.5" width="108" height="15.5"/>
  <rect x="1036.5" y="671.5" width="69.5" height="15.5"/>
  <rect x="1107" y="671.5" width="26" height="15.5"/>
  <rect x="1134" y="671.5" width="15" height="15.5"/>
  <rect x="1150.5" y="671.5" width="17" height="15.5"/>
  <rect x="1169" y="671.5" width="49.5" height="15.5"/>
  <rect x="1220" y="671.5" width="33" height="15.5"/>
 </g>
 <g fill="#4f86c2">
  <rect x="943.5" y="672" width="13.5" height="15"/>
  <rect x="994.5" y="672" width="14" height="15"/>
  <rect x="1010" y="672" width="15" height="15"/>
  <rect x="1038" y="672" width="14" height="15"/>
 </g>
 <g fill="none" stroke="#e8eaee" stroke-width="1">
  <path d="M888.5 674v11M891.5 674v11M894.5 674v11M886 676.5h10M886 679.5h10M886 682.5h10"/>
  <path d="M903 675.5h1.5M907 675.5h1.5M911 675.5h1.5M903 679h1.5M907 679h1.5M911 679h1.5M903 682.5h1.5M907 682.5h1.5M911 682.5h1.5" stroke-width="1.6"/>
  <path d="M929.5 673.5v11.5h11"/><path d="M931 683h2v-2"/>
  <circle cx="950" cy="680" r="4.5"/><path d="M950 680l4-4"/>
  <path d="M997 684.5l9-8"/><circle cx="1002" cy="680.5" r="0.8" fill="#e8eaee"/>
  <rect x="1013.5" y="675.5" width="9" height="9"/><rect x="1011.5" y="673.5" width="3" height="3" fill="#4f86c2"/>
  <path d="M1045 676l-5 9M1045 676l5 9M1045 680l-3 2" stroke-width="1.6"/><circle cx="1049" cy="675.5" r="1.8"/>
  <path d="M1061 677l-5 8M1061 677l4 8M1059 680l-3 1" stroke-width="1.6"/><path d="M1063 674l2 2M1065 674l-2 2" stroke-width="0.8"/>
  <path d="M1077 674v6M1077 680l-5 5M1077 680l5 5" stroke-width="1.6"/>
  <path d="M1141 673v12M1135 679h12" stroke-width="1.3"/>
  <rect x="1154.5" y="673.5" width="4" height="4"/><path d="M1157 680l-3 5h6z"/><circle cx="1162.5" cy="676.5" r="2"/>
  <rect x="1223.5" y="675" width="10.5" height="9" rx="1" stroke="#c8ccd2"/><path d="M1225 683l3-3M1225 683h2" stroke="#c8ccd2"/><rect x="1230" y="676.5" width="2" height="2" fill="#e8eaee" stroke="none"/>
  <path d="M1239 675.5h10M1239 679.5h10M1239 683.5h10" stroke-width="1.2"/>
 </g>
 <path d="M918 678h4.5l-2.25 2.5z M961 678h4.5l-2.25 2.5z M986 678h4.5l-2.25 2.5z M1028 678h4.5l-2.25 2.5z M1099 678h4.5l-2.25 2.5z M1125.5 678h4.5l-2.25 2.5z" fill="#dfe2e6"/>
 <path d="M971 674l10 11" stroke="#d04848" stroke-width="1"/><path d="M975.5 673v13" stroke="#3cb043" stroke-width="1"/><circle cx="975.5" cy="679" r="1" fill="#eee"/>
 <g transform="translate(1115 679)"><circle r="3.6" fill="#e8eaee"/><circle r="1.5" fill="#353c48"/>
 <path d="M0 -5.5v11M-5.5 0h11M-3.9 -3.9l7.8 7.8M3.9 -3.9l-7.8 7.8" stroke="#e8eaee" stroke-width="1.6"/></g>
 <rect x="1171" y="674" width="7" height="5" fill="#4a8fd4"/><rect x="1171" y="680" width="6" height="5" fill="#e0b030"/><path d="M1175 682l2.5 3 5-6" stroke="#40c040" fill="none" stroke-width="1.3"/><path d="M1172 675h8" stroke="#e8eaee" stroke-width="0.7"/>
 <rect x="1186.5" y="674.5" width="10" height="8" fill="#cfd3d8"/><path d="M1187 681l3-3 3 2 3-3" stroke="#353c48" fill="none" stroke-width="0.8"/><path d="M1192 686l4-7 4 7z" fill="#e88a30"/>
 <path d="M1203.5 677.5v-3h2v3M1203 678.5h6v3h5v4.5h-11z" fill="none" stroke="#d9a05a" stroke-width="1"/>
</svg>
<div class="t" style="left:852.5px;top:674.3px;color:#dfe2e6;font-size:8.5px;letter-spacing:-0.3px;transform:scaleX(0.974);transform-origin:0 0">MODEL</div>
<div class="t" style="left:1086.5px;top:674.3px;color:#dfe2e6;font-size:8.5px;letter-spacing:-0.5px;transform:scaleX(0.968);transform-origin:0 0">1:1</div>

<!-- dialog -->
<div class="a" style="left:440px;top:208px;width:421px;height:331px;background:#1b3560;box-shadow:0 2px 10px rgba(0,0,0,0.35)"></div>
<div class="a" style="left:441px;top:209px;width:419px;height:329px;background:#f0f0f0"></div>
<div class="a" style="left:441px;top:209px;width:419px;height:19px;background:#fff"></div>
<svg style="left:0;top:0" width="1257" height="694">
 <path d="M447 222l3.5-9h2l3.5 9h-2l-.8-2.3h-3.4l-.8 2.3z M450.8 218h2.4l-1.2-3.4z" fill="#d0232a" fill-rule="evenodd"/>
 <path d="M847 215l7 7M854 215l-7 7" stroke="#444" stroke-width="0.9"/>
</svg>
<div class="dl" style="left:459.7px;top:213.4px;font-size:8.5px;color:#222;transform:scaleX(0.877);transform-origin:0 0">Select File</div>
<div class="dl" style="left:493.2px;top:235.2px;transform:scaleX(0.917);transform-origin:0 0">Look in:</div>
<!-- look in combo -->
<div class="a" style="left:525px;top:234px;width:160px;height:13px;background:#e5e5e5;border:1px solid #adadad"></div>
<div class="a" style="left:528px;top:236px;width:10px;height:9px;background:#1d6fd6;border-radius:2px"></div>
<div class="a" style="left:528.5px;top:237px;font-size:5px;line-height:7px;color:#fff;font-weight:bold">box</div>
<div class="dl" style="left:540.0px;top:236.0px;transform:scaleX(0.892);transform-origin:0 0">Box</div>
<svg style="left:0;top:0" width="1257" height="694">
 <path d="M677 239l2.5 2.5 2.5-2.5" fill="none" stroke="#444" stroke-width="0.9"/>
 <!-- toolbar -->
 <path d="M693 239l4-4v2.5h6v3h-6v2.5z" fill="#a9a9a9"/>
 <path d="M709 236h4l1 1h4v7h-9z" fill="#e4b24c"/><path d="M714 242l2-2 2 2z" fill="#2f6fbf"/>
 <circle cx="730" cy="238" r="4" fill="#8fb2d3" stroke="#5e7f9f" stroke-width="0.6"/><circle cx="733" cy="241" r="2" fill="none" stroke="#333" stroke-width="0.9"/><path d="M734.5 242.5l1.8 1.8" stroke="#333"/>
 <path d="M743 235l9 8M752 235l-9 8" stroke="#d43f3a" stroke-width="2"/>
 <path d="M758 236h4l1 1h4v7h-9z" fill="#e4b24c"/><circle cx="766" cy="244" r="1.5" fill="#2f6fbf"/>
 <path d="M808 238h5l-2.5 2.5z M846 238h5l-2.5 2.5z" fill="#111"/>
</svg>
<div class="dl" style="left:780.0px;top:235.1px;transform:scaleX(0.882);transform-origin:0 0">Views</div>
<div class="dl" style="left:819.3px;top:235.1px;transform:scaleX(0.920);transform-origin:0 0">Tools</div>
<!-- places bar -->
<div class="a" style="left:444px;top:252px;width:75px;height:279px;background:#bccbda;border:1px solid #8394a8"></div>
<div class="a" style="left:469px;top:410px;width:26px;height:26px;background:#cad6e2;border-left:1px solid #333;border-top:1px solid #555;border-right:1px solid #d8e0e8;border-bottom:1px solid #d8e0e8"></div>
<div class="dl" style="left:470.0px;top:281.8px;color:#fff;transform:scaleX(0.860);transform-origin:0 0">History</div>
<div class="dl" style="left:463.5px;top:320.8px;color:#fff;transform:scaleX(0.865);transform-origin:0 0">Documents</div>
<div class="dl" style="left:467.5px;top:360.4px;color:#fff;transform:scaleX(0.899);transform-origin:0 0">Desktop</div>
<div class="dl" style="left:452.9px;top:400.0px;color:#fff;transform:scaleX(0.881);transform-origin:0 0">OneDrive - auto...</div>
<div class="dl" style="left:475.2px;top:439.6px;color:#fff;transform:scaleX(0.906);transform-origin:0 0">Box</div>
<div class="dl" style="left:467.1px;top:477.2px;color:#fff;transform:scaleX(0.906);transform-origin:0 0">Dropbox</div>
<svg style="left:0;top:0" width="1257" height="694">
 <rect x="482.5" y="263.5" width="7" height="11" fill="#f4f4f4" stroke="#9a9a9a" stroke-width="0.6"/>
 <path d="M484 266h4M484 268h4M484 270h4" stroke="#b0b0b0" stroke-width="0.6"/>
 <rect x="474.5" y="268" width="9.5" height="6.5" fill="#6fa3d6"/><path d="M474.5 274.5v-2.5l3-2 3 1.5 3.5-1v4z" fill="#2f4f5c"/>
 <circle cx="477" cy="262" r="5" fill="#dedede" stroke="#808080" stroke-width="0.7"/><path d="M477 259v3l2 1.5" stroke="#555" stroke-width="0.7" fill="none"/>
 <path d="M474 297.5h4.5l1 1.5h4.5v15h-10z" fill="#f1c75a"/><path d="M474 299h3v15h-3z" fill="#e0a93a"/>
 <rect x="480.5" y="301" width="8.5" height="11" fill="#fafafa" stroke="#8c8c8c" stroke-width="0.6"/>
 <rect x="482" y="303" width="5.5" height="3.5" fill="#6fa3d6"/><path d="M482 308h5.5M482 310h5.5" stroke="#9a9a9a" stroke-width="0.6"/>
 <rect x="471" y="338" width="19" height="13" fill="#2a9df4"/>
 <path d="M473 379h5l1 1h6v14h-12z" fill="#f3cf6a"/><path d="M479 392a3 3 0 0 1 3-4a3 3 0 0 1 6 1a2 2 0 0 1 0 4h-9z" fill="#1f6fd0"/>
 <path d="M473 419h5l1 1h6v14h-12z" fill="#f3cf6a"/><rect x="479" y="420" width="12" height="10" fill="#1d6fd6" rx="2"/>
 <text x="480.5" y="427.5" font-size="5" fill="#fff" font-family="Liberation Sans" font-weight="bold">box</text>
 <rect x="471" y="428" width="5" height="5" fill="#fff"/><path d="M472 432l3-3" stroke="#333" stroke-width="0.8"/>
 <path d="M473 457h5l1 1h6v14h-12z" fill="#f3cf6a"/><path d="M480 462l3 2-3 2-3-2zM486 462l3 2-3 2-3-2zM480 466l3 2-3 2-3-2zM486 466l3 2-3 2-3-2z" fill="#1f6fd0"/>
</svg>
<!-- file list -->
<div class="a" style="left:525px;top:252px;width:158px;height:215px;background:#fff"></div>
<div class="a" style="left:629px;top:252px;width:1px;height:215px;background:#f0f0f0"></div>
<div class="a" style="left:528px;top:268px;width:155px;height:12px;background:#cce8ff"></div>
<svg style="left:0;top:0" width="1257" height="694">
 <rect x="528.5" y="255.5" width="8" height="8" fill="#fff" stroke="#333" stroke-width="0.9"/>
 <path d="M575 254l2-2 2 2" fill="none" stroke="#999" stroke-width="0.7"/>
 <rect x="530.5" y="269.5" width="8" height="8" fill="#fff" stroke="#333" stroke-width="0.9"/>
 <path d="M532 273.5l2 2 3.5-4" fill="none" stroke="#222" stroke-width="0.9"/>
 <g>
  <rect x="541" y="268" width="9" height="10" fill="#3f79ad"/><path d="M542 276l3-6 4 6z" fill="#e9edf1"/><rect x="546" y="275" width="4" height="3" fill="#e8a23a"/>
  <rect x="541" y="281" width="9" height="10" fill="#3f79ad"/><path d="M542 289l3-6 4 6z" fill="#e9edf1"/><rect x="546" y="288" width="4" height="3" fill="#e8a23a"/>
  <rect x="541" y="294" width="9" height="10" fill="#3f79ad"/><path d="M542 302l3-6 4 6z" fill="#e9edf1"/><rect x="546" y="301" width="4" height="3" fill="#e8a23a"/>
 </g>
 <!-- scrollbar -->
 <path d="M532.5 468.5l-2 2.5 2 2.5M677 468.5l2 2.5-2 2.5" fill="none" stroke="#555" stroke-width="1"/>
</svg>
<div class="dl" style="left:540.3px;top:255.3px;transform:scaleX(0.998);transform-origin:0 0">Name</div>
<div class="dl" style="left:633.4px;top:255.3px;color:#1e395b;transform:scaleX(1.001);transform-origin:0 0">Date modified</div>
<div class="dl" style="left:552.5px;top:269.7px;transform:scaleX(0.861);transform-origin:0 0">GRIPPER ASSEMBLY...</div>
<div class="dl" style="left:552.5px;top:282.0px;transform:scaleX(0.965);transform-origin:0 0">Rhodia - Sodeco pl...</div>
<div class="dl" style="left:552.5px;top:294.5px;transform:scaleX(0.881);transform-origin:0 0">ROBOT_FINISHED.d...</div>
<div class="dl" style="left:633.4px;top:269.7px;transform:scaleX(0.929);transform-origin:0 0">2/28/2019 9:08</div>
<div class="dl" style="left:633.4px;top:282.0px;transform:scaleX(0.929);transform-origin:0 0">2/28/2019 9:08</div>
<div class="dl" style="left:633.4px;top:294.5px;transform:scaleX(0.929);transform-origin:0 0">2/28/2019 9:13</div>
<div class="a" style="left:536px;top:467px;width:69px;height:10px;background:#cdcdcd"></div>
<!-- preview -->
<div class="a" style="left:690px;top:258px;width:165px;height:123px;border:1px solid #dcdcdc"></div>
<div class="dl" style="left:695.4px;top:253.7px;background:#f0f0f0;padding:0 1px;transform:scaleX(0.882);transform-origin:0 0">Preview</div>
<div class="a" style="left:694px;top:286px;width:158px;height:70px;background:#212830"></div>
<svg style="left:0;top:0" width="1257" height="694">
 <path d="M771 318h22" stroke="#e6e6e6" stroke-width="1"/><path d="M776 316.5h4M785 316.5h4" stroke="#cfcfcf" stroke-width="0.7"/>
 <path d="M769.5 315.5l2 2.5-2 2.5M772.5 315.5l-2 2.5 2 2.5M792.5 315.5l2 2.5-2 2.5M795.5 315.5l-2 2.5 2 2.5" stroke="#8fe0e8" stroke-width="0.9" fill="none"/>
 <rect x="770.5" y="322.5" width="23" height="11" fill="none" stroke="#e6e6e6" stroke-width="1"/>
 <path d="M770.5 322v12" stroke="#d040d0" stroke-width="1.6"/>
 <path d="M773 324.5h3M782 324.5h4" stroke="#bfe8ec" stroke-width="0.8"/>
</svg>
<div class="a" style="left:690px;top:392px;width:165px;height:44px;border:1px solid #dcdcdc"></div>
<div class="dl" style="left:695.4px;top:387.6px;background:#f0f0f0;padding:0 1px;transform:scaleX(0.869);transform-origin:0 0">Initial View</div>
<div class="a" style="left:697px;top:410px;width:9px;height:9px;border:1px solid #333;background:#fff"></div>
<div class="dl" style="left:707.5px;top:410.6px;transform:scaleX(0.866);transform-origin:0 0">Select Initial View</div>
<!-- bottom -->
<div class="dl" style="left:526.3px;top:498.3px;transform:scaleX(0.854);transform-origin:0 0">File name:</div>
<div class="dl" style="left:526.3px;top:518.5px;transform:scaleX(0.864);transform-origin:0 0">Files of type:</div>
<div class="a" style="left:575px;top:498px;width:223px;height:14px;background:#fff;border:1px solid #7a7a7a"></div>
<div class="dl" style="left:576.6px;top:500.1px;transform:scaleX(0.895);transform-origin:0 0">GRIPPER ASSEMBLY NEW.dwg</div>
<div class="a" style="left:575px;top:518px;width:223px;height:14px;background:#e5e5e5;border:1px solid #adadad"></div>
<div class="dl" style="left:578.1px;top:521.1px;transform:scaleX(0.870);transform-origin:0 0">Drawing (*.dwg)</div>
<svg style="left:0;top:0" width="1257" height="694">
 <path d="M790 504l2.5 2.5 2.5-2.5M790 524l2.5 2.5 2.5-2.5" fill="none" stroke="#444" stroke-width="0.9"/>
 </svg>
<div class="a" style="left:800px;top:497px;width:42px;height:14px;background:#e1e1e1;border:1px solid #adadad"></div>
<div class="a" style="left:844px;top:497px;width:9px;height:14px;background:#e1e1e1;border:1px solid #adadad"></div>
<div class="a" style="left:800px;top:518px;width:54px;height:14px;background:#e1e1e1;border:1px solid #adadad"></div>
<div class="dl" style="left:811.4px;top:499.8px;transform:scaleX(0.919);transform-origin:0 0">Open</div>
<div class="dl" style="left:815.5px;top:520.2px;transform:scaleX(0.891);transform-origin:0 0">Cancel</div>
<svg style="left:0;top:0" width="1257" height="694"><path d="M846 503h5l-2.5 2.5z" fill="#111"/><path d="M812 509.5h5" stroke="#222" stroke-width="0.8"/><path d="M781 245h4M826.5 245h2.5" stroke="#222" stroke-width="0.6"/></svg>
</body></html>
